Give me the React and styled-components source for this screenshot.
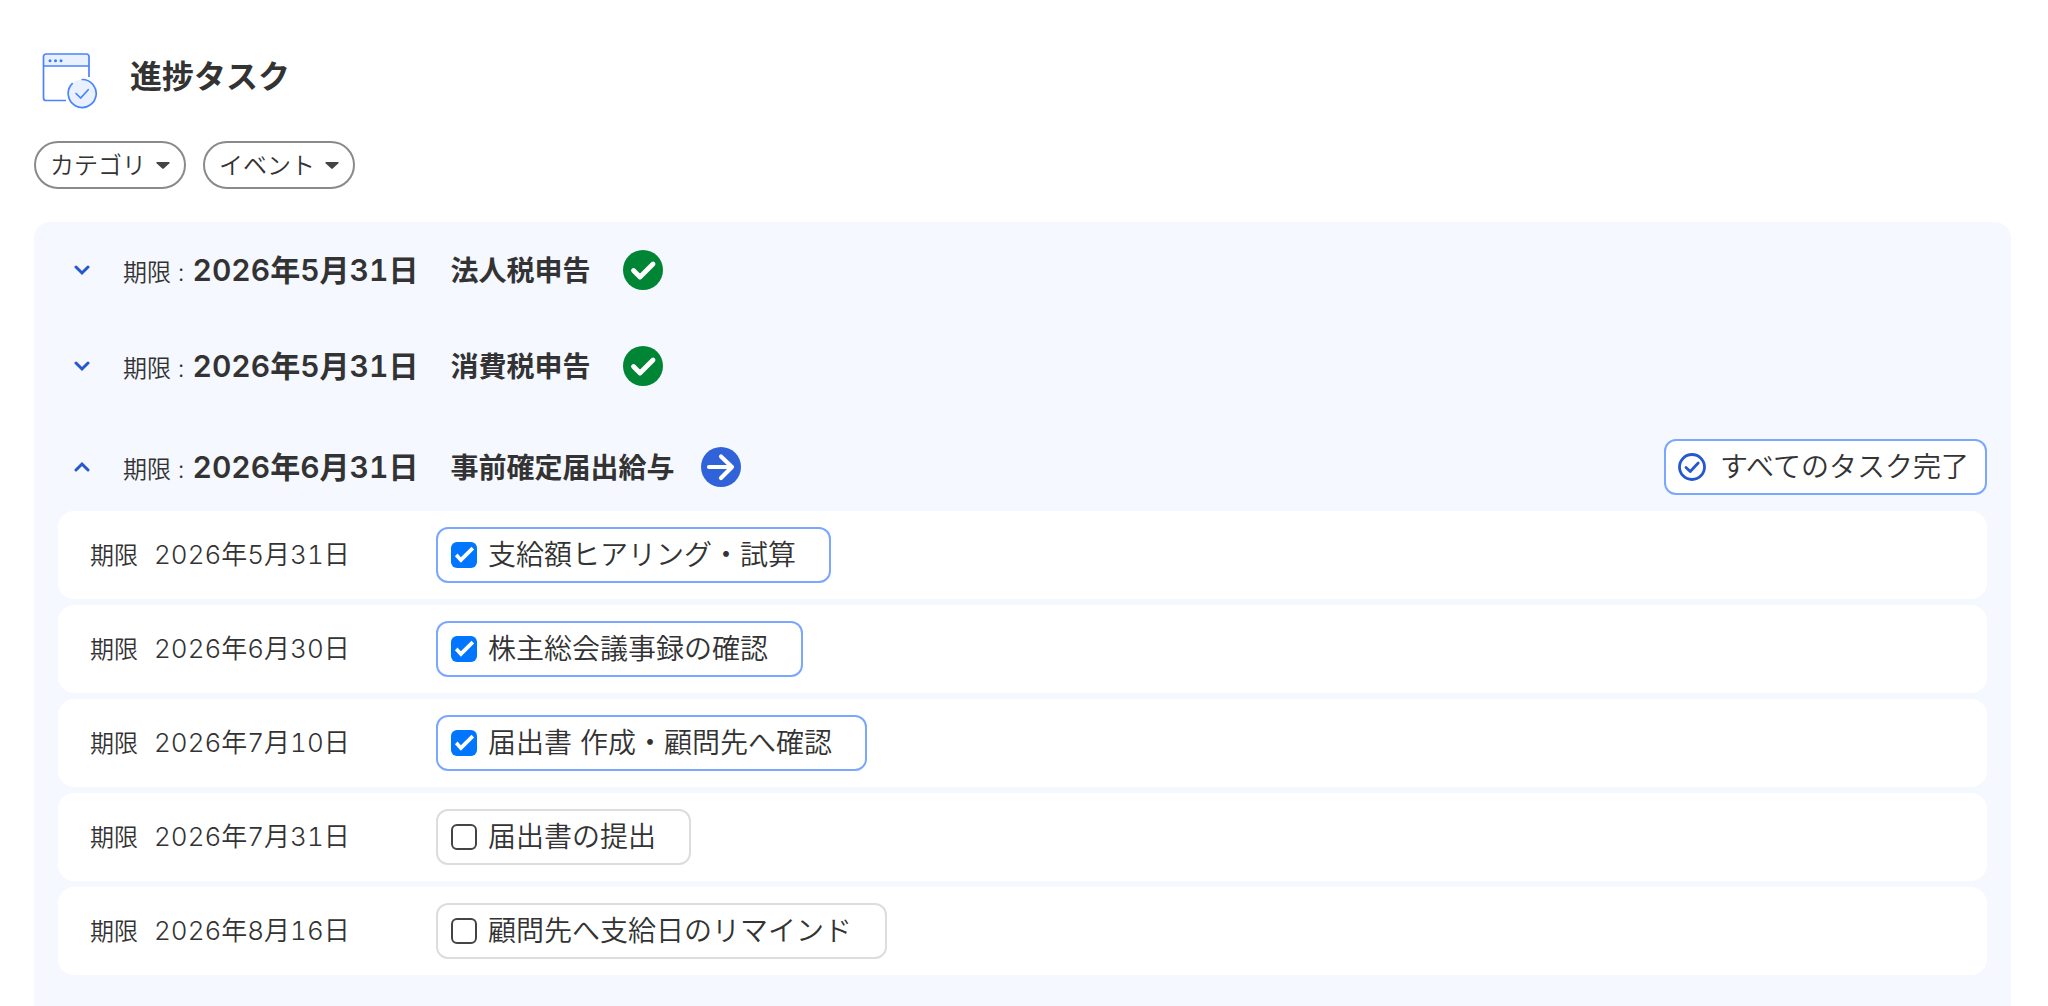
import React, { useState } from "react";
import styled, { createGlobalStyle } from "styled-components";

const GlobalStyle = createGlobalStyle`
    * {
        box-sizing: border-box;
    }
    body {
        margin: 0;
        background-color: #fff;
        color: #333;
        font-family: Inter, "Noto Sans CJK JP", sans-serif;
        font-weight: 350;
    }
    button, input, select {
        margin: 0;
        padding: 0;
        color: inherit;
        font: inherit;
    }
    h1, h2, p, ul {
        margin: 0;
        padding: 0;
    }
    ul {
        list-style: none;
    }
`;

const Page = styled.main`
    display: flex;
    flex-direction: column;
    min-height: 100vh;
    padding: 47px 37px 0 34px;
`;
const PageHeader = styled.header`
    display: flex;
    align-items: center;
    gap: 30px;
    height: 64px;
    padding-left: 6px;
`;
const PageTitle = styled.h1`
    padding-bottom: 4px;
    font-weight: 700;
    font-size: 32px;
    line-height: 48px;
`;
const FilterBar = styled.div`
    display: flex;
    gap: 17px;
    margin: 30px 0 33px;
`;
const FilterBox = styled.label`
    position: relative;
    display: flex;
`;
const FilterSelect = styled.select`
    appearance: none;
    height: 48px;
    padding: 0 38px 0 14px;
    border: 2px solid #8a8a8a;
    border-radius: 24px;
    background-color: #fff;
    font-size: 24px;
    cursor: pointer;
`;
const FilterCaret = styled.svg`
    position: absolute;
    top: 21px;
    right: 16px;
    pointer-events: none;
`;

const Panel = styled.section`
    flex: 1;
    padding: 0 24px 28px;
    border-radius: 16px 16px 0 0;
    background-color: #f5f8ff;
`;
const EventArticle = styled.article`
    padding-top: ${({ $open }) => ($open ? "5px" : "0")};
`;
const EventHeader = styled.header`
    display: flex;
    align-items: center;
    min-height: ${({ $open }) => ($open ? "92px" : "96px")};
    padding: ${({ $open }) => ($open ? "20px 0 16px" : "0")};
`;
const ToggleButton = styled.button`
    display: flex;
    align-items: center;
    justify-content: center;
    width: 48px;
    height: 40px;
    margin-right: 17px;
    border: none;
    background-color: inherit;
    cursor: pointer;
`;
const EventSummary = styled.div`
    display: flex;
    align-items: baseline;
    padding-top: 2px;
`;
const DueLabel = styled.span`
    font-size: 24px;
    line-height: 38px;
`;
const EventDate = styled.time`
    width: 258px;
    margin-left: 8px;
    font-weight: 600;
    font-size: 30px;
    line-height: 38px;
    font-variant-numeric: tabular-nums;
`;
const EventName = styled.h2`
    font-weight: 700;
    font-size: 28px;
    line-height: 38px;
`;
const StatusIcon = styled.svg`
    margin-left: ${({ $done }) => ($done ? "32px" : "26px")};
    color: ${({ $done }) => ($done ? "#008535" : "#3063d9")};
`;
const CompleteButton = styled.button`
    display: flex;
    align-items: center;
    gap: 14px;
    height: 56px;
    margin-left: auto;
    padding: 0 16px 0 12px;
    border: 2px solid #7aa7ff;
    border-radius: 12px;
    background-color: #fff;
    font-size: 28px;
    line-height: 40px;
    cursor: pointer;
`;

const TaskList = styled.ul`
    display: grid;
    gap: 6px;
`;
const TaskItem = styled.li`
    display: flex;
    align-items: center;
    padding: 16px 32px;
    border-radius: 16px;
    background-color: #fff;
`;
const TaskDue = styled.p`
    display: flex;
    align-items: baseline;
    gap: 16px;
    width: 346px;
`;
const TaskDate = styled.time`
    font-size: 26px;
    line-height: 38px;
    font-variant-numeric: tabular-nums;
`;
const TaskLabel = styled.label`
    display: flex;
    align-items: center;
    gap: 11px;
    height: 56px;
    padding: 0 33px 0 13px;
    border: 2px solid ${({ $checked }) => ($checked ? "#7aa7ff" : "#ddd")};
    border-radius: 12px;
    font-size: 28px;
    line-height: 40px;
    cursor: pointer;
`;
const TaskCheck = styled.input`
    appearance: none;
    display: block;
    width: 26px;
    height: 26px;
    border: 2px solid #444;
    border-radius: 6px;
    background-color: #fff;
    cursor: pointer;

    &:checked {
        border: none;
        background-color: #0075ff;
    }
    &:checked::before {
        content: "";
        display: block;
        width: 26px;
        height: 26px;
        background-color: #fff;
        clip-path: polygon(15% 55%, 25% 44%, 38% 59%, 79% 18%, 89% 29%, 38% 80%);
    }
`;

const filters = ["カテゴリ", "イベント"];

const initialEvents = [
    { id: 1, date: "2026年5月31日", name: "法人税申告", done: true, tasks: [] },
    { id: 2, date: "2026年5月31日", name: "消費税申告", done: true, tasks: [] },
    {
        id: 3,
        date: "2026年6月31日",
        name: "事前確定届出給与",
        done: false,
        tasks: [
            { id: 31, date: "2026年5月31日", name: "支給額ヒアリング・試算", checked: true },
            { id: 32, date: "2026年6月30日", name: "株主総会議事録の確認", checked: true },
            { id: 33, date: "2026年7月10日", name: "届出書 作成・顧問先へ確認", checked: true },
            { id: 34, date: "2026年7月31日", name: "届出書の提出", checked: false },
            { id: 35, date: "2026年8月16日", name: "顧問先へ支給日のリマインド", checked: false },
        ],
    },
];

const TaskWindowIcon = () => (
    <svg width="60" height="60" viewBox="0 0 60 60" fill="none" aria-hidden="true">
        <path d="M3.5 17V7.5a2.5 2.5 0 0 1 2.5-2.5h40.5A2.5 2.5 0 0 1 49 7.5V17z" fill="#e9f1ff" />
        <path
            d="M49 28V7.5a2.5 2.5 0 0 0-2.5-2.5H6a2.5 2.5 0 0 0-2.5 2.5V49A2.5 2.5 0 0 0 6 51.5h20M3.5 17H49"
            stroke="#4a82ff"
            strokeWidth="1.7"
        />
        <circle cx="10" cy="11.7" r="1.5" fill="#3b78ff" />
        <circle cx="15.5" cy="11.7" r="1.5" fill="#3b78ff" />
        <circle cx="21" cy="11.7" r="1.5" fill="#3b78ff" />
        <circle cx="42.2" cy="44.5" r="14" fill="#e9f1ff" />
        <path
            d="M42.2 30.5a14 14 0 1 1-10 4.2"
            stroke="#4a82ff"
            strokeWidth="1.7"
            strokeLinecap="round"
        />
        <path d="M36 44.5l4.700 4.500 7.500-8.300" stroke="#4a82ff" strokeWidth="1.7" strokeLinecap="round" />
    </svg>
);

const Chevron = ({ open }) => (
    <svg width="16" height="12" viewBox="0 0 16 12" fill="none" aria-hidden="true">
        <path
            d={open ? "M2 9l6-6 6 6" : "M2 3l6 6 6-6"}
            stroke="#2558d0"
            strokeWidth="3"
            strokeLinecap="round"
        />
    </svg>
);

const Status = ({ done }) => (
    <StatusIcon $done={done} width="40" height="40" viewBox="0 0 40 40" fill="none" aria-hidden="true">
        <circle cx="20" cy="20" r="20" fill="currentColor" />
        <path
            d={done ? "M10.5 20.5l6.5 6.5 13-13" : "M8 20h23M20 9.5l11 10.5-11 11"}
            stroke="#fff"
            strokeWidth={done ? 4.8 : 4.2}
            strokeLinecap="round"
            strokeLinejoin="round"
        />
    </StatusIcon>
);

const CompleteIcon = () => (
    <svg width="28" height="28" viewBox="0 0 28 28" fill="none" aria-hidden="true">
        <circle cx="14" cy="14" r="12.5" stroke="#2558d0" strokeWidth="2.8" />
        <path
            d="M8 14.5l4.200 4 8-8.500"
            stroke="#2558d0"
            strokeWidth="2.8"
            strokeLinecap="round"
            strokeLinejoin="round"
        />
    </svg>
);

const Filter = ({ name }) => (
    <FilterBox>
        <FilterSelect aria-label={name}>
            <option>{name}</option>
        </FilterSelect>
        <FilterCaret width="14" height="7" viewBox="0 0 14 7" aria-hidden="true">
            <path d="M1 0h12q1 .4.4 1.2L7.8 6.5q-.8.7-1.6 0L.6 1.2Q0 .4 1 0z" fill="#444" />
        </FilterCaret>
    </FilterBox>
);

const Task = ({ task, onToggle }) => (
    <TaskItem>
        <TaskDue>
            <DueLabel>期限</DueLabel>
            <TaskDate>{task.date}</TaskDate>
        </TaskDue>
        <TaskLabel $checked={task.checked}>
            <TaskCheck
                type="checkbox"
                checked={task.checked}
                onChange={() => onToggle(task.id)}
            />
            {task.name}
        </TaskLabel>
    </TaskItem>
);

const Event = ({ event, defaultOpen }) => {
    const [open, setOpen] = useState(defaultOpen);
    const [tasks, setTasks] = useState(event.tasks);

    const toggleTask = (id) => {
        setTasks(tasks.map((v) => (v.id === id ? { ...v, checked: !v.checked } : v)));
    };
    const completeAll = () => {
        setTasks(tasks.map((v) => ({ ...v, checked: true })));
    };

    return (
        <EventArticle $open={open}>
            <EventHeader $open={open}>
                <ToggleButton
                    type="button"
                    aria-label={event.name}
                    aria-expanded={open}
                    onClick={() => setOpen(!open)}
                >
                    <Chevron open={open} />
                </ToggleButton>
                <EventSummary>
                    <DueLabel>期限 :</DueLabel>
                    <EventDate>{event.date}</EventDate>
                    <EventName>{event.name}</EventName>
                </EventSummary>
                <Status done={event.done} />
                {open && (
                    <CompleteButton type="button" onClick={completeAll}>
                        <CompleteIcon />
                        すべてのタスク完了
                    </CompleteButton>
                )}
            </EventHeader>
            {open && (
                <TaskList>
                    {tasks.map((v) => (
                        <Task key={v.id} task={v} onToggle={toggleTask} />
                    ))}
                </TaskList>
            )}
        </EventArticle>
    );
};

const App = () => {
    return (
        <>
            <GlobalStyle />
            <Page>
                <PageHeader>
                    <TaskWindowIcon />
                    <PageTitle>進捗タスク</PageTitle>
                </PageHeader>
                <FilterBar>
                    {filters.map((v) => (
                        <Filter key={v} name={v} />
                    ))}
                </FilterBar>
                <Panel>
                    {initialEvents.map((v) => (
                        <Event key={v.id} event={v} defaultOpen={!v.done} />
                    ))}
                </Panel>
            </Page>
        </>
    );
};

export default App;
